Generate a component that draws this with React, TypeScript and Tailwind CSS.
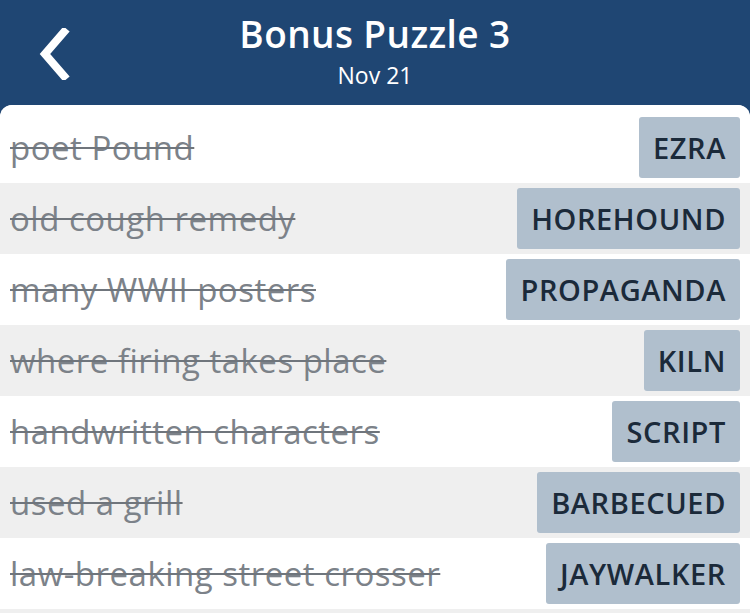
import React from 'react';

const clues = [
  { clue: 'poet Pound', answer: 'EZRA' },
  { clue: 'old cough remedy', answer: 'HOREHOUND' },
  { clue: 'many WWII posters', answer: 'PROPAGANDA' },
  { clue: 'where firing takes place', answer: 'KILN' },
  { clue: 'handwritten characters', answer: 'SCRIPT' },
  { clue: 'used a grill', answer: 'BARBECUED' },
  { clue: 'law-breaking street crosser', answer: 'JAYWALKER' },
];

const App = () => {
  return (
    <div className="w-[750px] h-[613px] overflow-hidden bg-[#1f4673] font-['Open_Sans','Noto_Sans',sans-serif]">
      {/* Header */}
      <div className="relative h-[105px] flex flex-col items-center">
        <button className="absolute left-[36px] top-[28px] text-white" type="button">
          <svg width="36" height="52" viewBox="0 0 36 52" fill="none">
            <path d="M28 4 L9 26 L28 48" stroke="currentColor" strokeWidth="8" strokeLinecap="square" strokeLinejoin="miter" />
          </svg>
        </button>
        <h1 className="mt-[10px] text-white font-semibold text-[37px] leading-[48px] tracking-[0.4px]">Bonus Puzzle 3</h1>
        <div className="text-white text-[23px] leading-[28px] mt-[3px]">Nov 21</div>
      </div>
      {/* Clue list */}
      <div className="bg-[#efefef] h-[508px] rounded-t-[12px] overflow-hidden">
        <div className="bg-white h-[7px]" />
        {clues.map((c, i) => (
          <div
            key={c.answer}
            className={`${i % 2 === 0 ? 'bg-white' : 'bg-[#efefef]'} h-[71px] flex items-center justify-between pl-[10px] pr-[10px]`}
          >
            <span className="text-[33px] tracking-[0.5px] text-[#7c8289] line-through decoration-[#6f757c] decoration-2">
              {c.clue}
            </span>
            <span className="h-[61px] flex items-center px-[14px] rounded-[3px] bg-[#b0bfcd] text-[#1b2a3a] font-semibold text-[29px] tracking-[0.6px]">
              {c.answer}
            </span>
          </div>
        ))}
      </div>
    </div>
  );
};

export default App;
